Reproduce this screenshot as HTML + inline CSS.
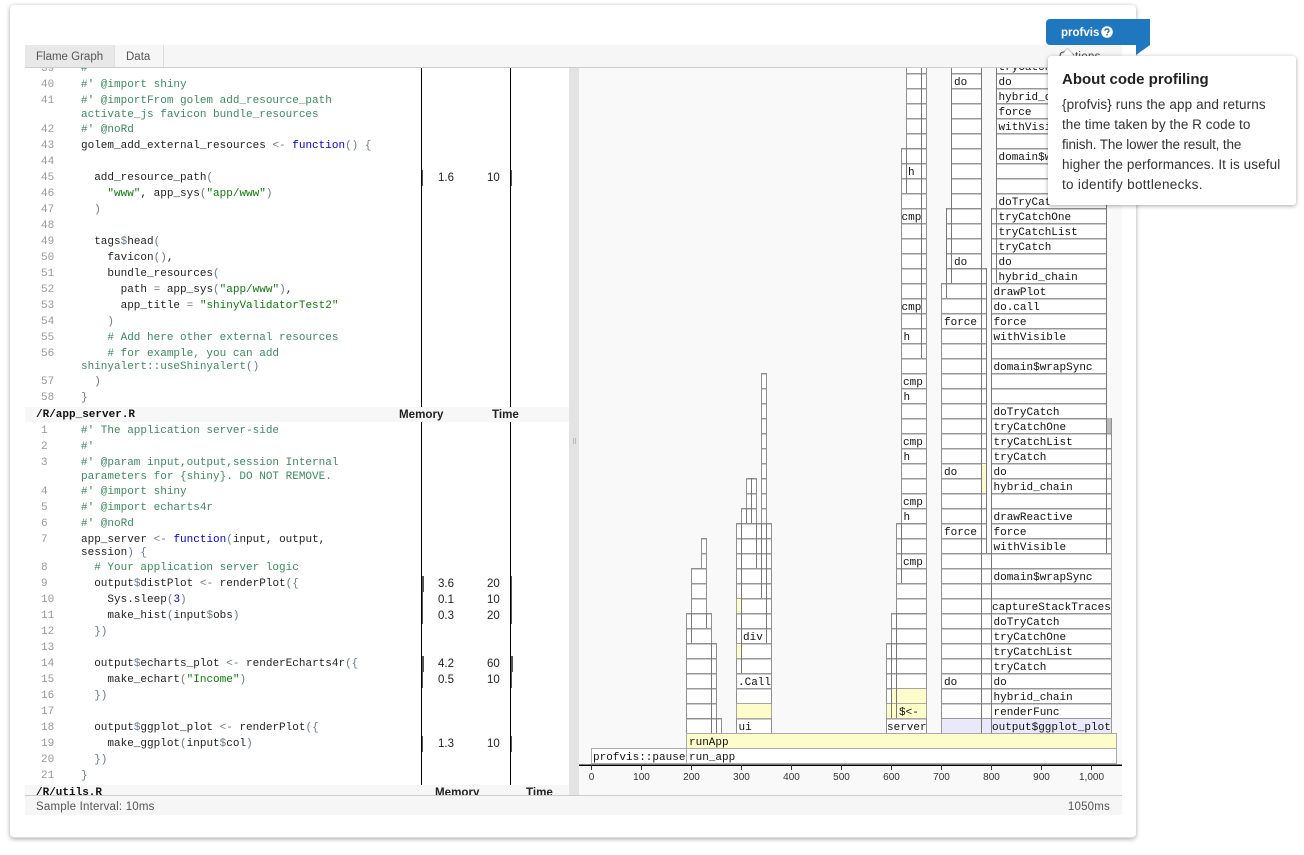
<!DOCTYPE html>
<html><head><meta charset="utf-8"><title>profvis</title>
<style>
html,body{margin:0;padding:0;background:#fff;width:1304px;height:855px;overflow:hidden}
body{position:relative;font-family:"Liberation Sans",sans-serif}
.abs{position:absolute}
#card{left:10px;top:5px;width:1126px;height:832px;background:#fff;border-radius:4px;box-shadow:0 1px 5px rgba(0,0,0,.35);border-bottom:1px solid #ddd}
#left{left:25px;top:68px;width:544px;height:727px;background:#fff;overflow:hidden}
#split{left:569px;top:68px;width:10px;height:727px;background:#e3e3e3}
#right{left:579px;top:68px;width:543px;height:727px;background:#f9f9f9}
#bar{left:25px;top:45px;width:1097px;height:22px;background:#f6f6f6;border-bottom:1px solid #ccc;font-size:11.5px;color:#555}
#t1{left:0;top:0;width:89px;height:22px;background:#e8e8e8;border-right:1px solid #ddd;line-height:24px;text-indent:11px}
#t2{left:90px;top:0;width:48px;height:22px;border-right:1px solid #ddd;line-height:24px;text-indent:11px}
#foot{left:25px;top:795px;width:1097px;height:19px;background:#f6f6f6;border-top:1px solid #ccc;font-size:11.5px;color:#555;line-height:22px;letter-spacing:.2px}
.l{position:absolute;left:56px;margin-top:1px;white-space:pre;font:11px/16px "Liberation Mono",monospace;color:#222}
.l i{position:absolute;left:-40px;font-style:normal;color:#999}
.c{color:#3d8a5f}.s{color:#0b7a0b}.k{color:#0000d0}.p{color:#6a7a8a}
.h{position:absolute;left:0;width:544px;height:15px;background:#f7f7f7;font:bold 11px/16px "Liberation Mono",monospace;color:#111}
.h b{position:absolute;top:0;font:bold 11.6px/16px "Liberation Sans",sans-serif;color:#222}
.v{position:absolute;background:#000}
.m{position:absolute;margin-top:1px;font-size:11.5px;line-height:16px;color:#222;white-space:pre}
.g{position:absolute;margin-top:1px;background:#555;height:16px}
#rib{left:1046px;top:19px;width:104px;height:26px;background:#1f77c0;border-radius:4px 0 0 4px;color:#fff;font-weight:bold;font-size:11.5px;line-height:25px}
#tip{left:1048px;top:56px;width:248px;height:149px;background:#fff;border-radius:3px;box-shadow:0 1px 4px rgba(0,0,0,.35)}
#tip h3{position:absolute;margin:0;left:14px;top:15px;font-size:15px;line-height:18px;color:#222;font-weight:bold;white-space:pre}
#tip div{position:absolute;left:14px;font-size:13.5px;line-height:20px;color:#333;white-space:pre}
svg text.f{font:11px "Liberation Mono",monospace;fill:#111}
svg text.a{font:10px "Liberation Sans",sans-serif;fill:#333;text-anchor:middle}
</style></head><body>
<div class="abs" id="card"></div>
<div class="abs" id="left">
<div class="g" style="left:396.500px;top:101px;width:1.500px"></div><div class="g" style="left:485px;top:101px;width:1.500px"></div>
<div class="m" style="left:413px;top:101px">1.6</div><div class="m" style="left:462px;top:101px">10</div>
<div class="g" style="left:396.500px;top:507px;width:2px"></div><div class="g" style="left:485px;top:507px;width:2px"></div>
<div class="m" style="left:413px;top:507px">3.6</div><div class="m" style="left:462px;top:507px">20</div>
<div class="g" style="left:396.500px;top:523px;width:1.500px"></div><div class="g" style="left:485px;top:523px;width:1.500px"></div>
<div class="m" style="left:413px;top:523px">0.1</div><div class="m" style="left:462px;top:523px">10</div>
<div class="g" style="left:396.500px;top:539px;width:1.500px"></div><div class="g" style="left:485px;top:539px;width:2px"></div>
<div class="m" style="left:413px;top:539px">0.3</div><div class="m" style="left:462px;top:539px">20</div>
<div class="g" style="left:396.500px;top:587px;width:2px"></div><div class="g" style="left:485px;top:587px;width:3px"></div>
<div class="m" style="left:413px;top:587px">4.2</div><div class="m" style="left:462px;top:587px">60</div>
<div class="g" style="left:396.500px;top:603px;width:1.500px"></div><div class="g" style="left:485px;top:603px;width:1.500px"></div>
<div class="m" style="left:413px;top:603px">0.5</div><div class="m" style="left:462px;top:603px">10</div>
<div class="g" style="left:396.500px;top:667px;width:1.500px"></div><div class="g" style="left:485px;top:667px;width:1.500px"></div>
<div class="m" style="left:413px;top:667px">1.3</div><div class="m" style="left:462px;top:667px">10</div>
<div class="v" style="left:395.500px;top:0;width:1.200px;height:339px"></div>
<div class="v" style="left:485px;top:0;width:1px;height:339px"></div>
<div class="v" style="left:395.500px;top:354px;width:1.200px;height:363px"></div>
<div class="v" style="left:485px;top:354px;width:1px;height:363px"></div>
<div class="l" style="top:-8px"><i>39</i><span class="c">#</span></div>
<div class="l" style="top:8px"><i>40</i><span class="c">#' @import shiny</span></div>
<div class="l" style="top:24px"><i>41</i><span class="c">#' @importFrom golem add_resource_path</span></div>
<div class="l" style="top:38px"><span class="c">activate_js favicon bundle_resources</span></div>
<div class="l" style="top:53px"><i>42</i><span class="c">#' @noRd</span></div>
<div class="l" style="top:69px"><i>43</i>golem_add_external_resources <span class="p">&lt;-</span> <span class="k">function</span><span class="p">() {</span></div>
<div class="l" style="top:85px"><i>44</i></div>
<div class="l" style="top:101px"><i>45</i>  add_resource_path<span class="p">(</span></div>
<div class="l" style="top:117px"><i>46</i>    <span class="s">"www"</span>, app_sys<span class="p">(</span><span class="s">"app/www"</span><span class="p">)</span></div>
<div class="l" style="top:133px"><i>47</i>  <span class="p">)</span></div>
<div class="l" style="top:149px"><i>48</i></div>
<div class="l" style="top:165px"><i>49</i>  tags<span class="p">$</span>head<span class="p">(</span></div>
<div class="l" style="top:181px"><i>50</i>    favicon<span class="p">()</span>,</div>
<div class="l" style="top:197px"><i>51</i>    bundle_resources<span class="p">(</span></div>
<div class="l" style="top:213px"><i>52</i>      path <span class="p">=</span> app_sys<span class="p">(</span><span class="s">"app/www"</span><span class="p">)</span>,</div>
<div class="l" style="top:229px"><i>53</i>      app_title <span class="p">=</span> <span class="s">"shinyValidatorTest2"</span></div>
<div class="l" style="top:245px"><i>54</i>    <span class="p">)</span></div>
<div class="l" style="top:261px"><i>55</i>    <span class="c"># Add here other external resources</span></div>
<div class="l" style="top:277px"><i>56</i>    <span class="c"># for example, you can add</span></div>
<div class="l" style="top:290px"><span class="c">shinyalert::useShinyalert</span><span class="p">()</span></div>
<div class="l" style="top:305px"><i>57</i>  <span class="p">)</span></div>
<div class="l" style="top:321px"><i>58</i><span class="p">}</span></div>
<div class="h" style="top:339px;text-indent:11px">/R/app_server.R<b style="left:374px;text-indent:0">Memory</b><b style="left:467px;text-indent:0">Time</b></div>
<div class="l" style="top:354px"><i>1</i><span class="c">#' The application server-side</span></div>
<div class="l" style="top:370px"><i>2</i><span class="c">#'</span></div>
<div class="l" style="top:386px"><i>3</i><span class="c">#' @param input,output,session Internal</span></div>
<div class="l" style="top:400px"><span class="c">parameters for {shiny}. DO NOT REMOVE.</span></div>
<div class="l" style="top:415px"><i>4</i><span class="c">#' @import shiny</span></div>
<div class="l" style="top:431px"><i>5</i><span class="c">#' @import echarts4r</span></div>
<div class="l" style="top:447px"><i>6</i><span class="c">#' @noRd</span></div>
<div class="l" style="top:463px"><i>7</i>app_server <span class="p">&lt;-</span> <span class="k">function</span><span class="p">(</span>input, output,</div>
<div class="l" style="top:476px">session<span class="p">) {</span></div>
<div class="l" style="top:491px"><i>8</i>  <span class="c"># Your application server logic</span></div>
<div class="l" style="top:507px"><i>9</i>  output<span class="p">$</span>distPlot <span class="p">&lt;-</span> renderPlot<span class="p">({</span></div>
<div class="l" style="top:523px"><i>10</i>    Sys.sleep<span class="p">(</span><span class="k">3</span><span class="p">)</span></div>
<div class="l" style="top:539px"><i>11</i>    make_hist<span class="p">(</span>input<span class="p">$</span>obs<span class="p">)</span></div>
<div class="l" style="top:555px"><i>12</i>  <span class="p">})</span></div>
<div class="l" style="top:571px"><i>13</i></div>
<div class="l" style="top:587px"><i>14</i>  output<span class="p">$</span>echarts_plot <span class="p">&lt;-</span> renderEcharts4r<span class="p">({</span></div>
<div class="l" style="top:603px"><i>15</i>    make_echart<span class="p">(</span><span class="s">"Income"</span><span class="p">)</span></div>
<div class="l" style="top:619px"><i>16</i>  <span class="p">})</span></div>
<div class="l" style="top:635px"><i>17</i></div>
<div class="l" style="top:651px"><i>18</i>  output<span class="p">$</span>ggplot_plot <span class="p">&lt;-</span> renderPlot<span class="p">({</span></div>
<div class="l" style="top:667px"><i>19</i>    make_ggplot<span class="p">(</span>input<span class="p">$</span>col<span class="p">)</span></div>
<div class="l" style="top:683px"><i>20</i>  <span class="p">})</span></div>
<div class="l" style="top:699px"><i>21</i><span class="p">}</span></div>
<div class="h" style="top:717px;height:12px;text-indent:11px;line-height:17px">/R/utils.R<b style="left:410px;text-indent:0;top:0">Memory</b><b style="left:501px;text-indent:0;top:0">Time</b></div>
</div>
<div class="abs" id="split">
<div class="abs" style="left:3.500px;top:370px;width:1px;height:6px;background:#bbb"></div>
<div class="abs" style="left:5.500px;top:370px;width:1px;height:6px;background:#bbb"></div>
</div>
<div class="abs" id="right"></div>

<svg class="abs" style="left:0;top:0" width="1304" height="855" viewBox="0 0 1304 855">
<defs>
<pattern id="r" width="20" height="15" patternUnits="userSpaceOnUse"><rect width="20" height="15" fill="#fff"/><rect y="13" width="20" height="1" fill="#999"/><rect y="14" width="20" height="1" fill="#ccc"/></pattern>
<clipPath id="cl"><rect x="579" y="68" width="543" height="727"/></clipPath>
</defs>
<g clip-path="url(#cl)">
<g fill="url(#r)" stroke="#8f8f8f" stroke-width="1">
<rect x="686.5" y="718.5" width="35" height="15"/>
<rect x="686.5" y="643.5" width="30" height="75"/>
<rect x="686.5" y="613.5" width="25" height="30"/>
<rect x="691.5" y="568.5" width="15" height="45"/>
<rect x="701.5" y="538.5" width="5" height="30"/>
<rect x="736.5" y="523.5" width="35" height="210"/>
<rect x="741.5" y="508.5" width="15" height="15"/>
<rect x="746.5" y="478.5" width="10" height="30"/>
<rect x="761.5" y="373.5" width="5" height="150"/>
<rect x="886.5" y="643.5" width="40" height="90"/>
<rect x="891.5" y="613.5" width="35" height="30"/>
<rect x="896.5" y="523.5" width="30" height="90"/>
<rect x="901.5" y="148.5" width="25" height="375"/>
<rect x="906.5" y="40.5" width="20" height="108"/>
<rect x="941.5" y="283.5" width="40" height="450"/>
<rect x="946.5" y="208.5" width="35" height="75"/>
<rect x="951.5" y="40.5" width="30" height="168"/>
<rect x="981.5" y="268.5" width="5" height="285"/>
<rect x="981.5" y="553.5" width="10" height="180"/>
<rect x="991.5" y="208.5" width="115" height="210"/>
<rect x="996.5" y="40.5" width="110" height="168"/>
<rect x="991.5" y="418.5" width="120" height="315"/>
<rect x="946.5" y="268.5" width="40" height="15"/>
</g>
<g fill="#fdfdcc" stroke="#8f8f8f" stroke-width=".6">
<rect x="736.5" y="703.5" width="35" height="15"/>
<rect x="736.5" y="643.5" width="5" height="15"/>
<rect x="736.5" y="598.5" width="5" height="15"/>
<rect x="886.5" y="703.5" width="40" height="15"/>
<rect x="891.5" y="688.5" width="35" height="15"/>
<rect x="981.5" y="463.5" width="5" height="30"/>
</g>
<rect x="941.5" y="718.5" width="170" height="15" fill="#e9e9fb" stroke="#999"/>
<rect x="1106" y="418" width="5" height="15" fill="#bbb"/>
<rect x="686.5" y="733.5" width="430" height="15" fill="#fdfdcc" stroke="#aaa"/>
<rect x="686.5" y="748.5" width="430" height="15" fill="#fff" stroke="#aaa"/>
<rect x="591.5" y="748.5" width="95" height="15" fill="#fff" stroke="#aaa"/>
<path fill="none" stroke="#777" stroke-width="1" d="M711.5 643V733M716.5 718V733M691.5 613V643M706.5 613V628M741.5 523V673M756.5 523V568M761.5 523V598M766.5 523V643M746.5 508V523M751.5 478V523M891.5 643V718M896.5 613V718M901.5 523V583M906.5 148V193M921.5 68V358M946.5 208V298M951.5 68V283M981.5 68V733M986.5 268V553M991.5 208V733M996.5 68V283M1106.5 68V553"/>
<g class="labels">
<text class="f" x="593" y="760">profvis::pause</text>
<text class="f" x="689" y="760">run_app</text>
<text class="f" x="689" y="745">runApp</text>
<text class="f" x="738.5" y="730">ui</text>
<text class="f" x="738" y="685">.Call</text>
<text class="f" x="743" y="640">div</text>
<text class="f" x="887" y="730">server</text>
<text class="f" x="899" y="715">$&lt;-</text>
<text class="f" x="903" y="565">cmp</text>
<text class="f" x="903.5" y="520">h</text>
<text class="f" x="903" y="505">cmp</text>
<text class="f" x="903.5" y="460">h</text>
<text class="f" x="903" y="445">cmp</text>
<text class="f" x="903.5" y="400">h</text>
<text class="f" x="903" y="385">cmp</text>
<text class="f" x="903.5" y="340">h</text>
<text class="f" x="901.5" y="310">cmp</text>
<text class="f" x="901.5" y="220">cmp</text>
<text class="f" x="908" y="175">h</text>
<text class="f" x="944" y="685">do</text>
<text class="f" x="944" y="535">force</text>
<text class="f" x="944" y="475">do</text>
<text class="f" x="944" y="325">force</text>
<text class="f" x="954" y="265">do</text>
<text class="f" x="954" y="85">do</text>
<text class="f" x="992" y="730">output$ggplot_plot</text>
<text class="f" x="993.5" y="715">renderFunc</text>
<text class="f" x="993.5" y="700">hybrid_chain</text>
<text class="f" x="993.5" y="685">do</text>
<text class="f" x="993.5" y="670">tryCatch</text>
<text class="f" x="993.5" y="655">tryCatchList</text>
<text class="f" x="993.5" y="640">tryCatchOne</text>
<text class="f" x="993.5" y="625">doTryCatch</text>
<text class="f" x="992" y="610">captureStackTraces</text>
<text class="f" x="993.5" y="580">domain$wrapSync</text>
<text class="f" x="993.5" y="550">withVisible</text>
<text class="f" x="993.5" y="535">force</text>
<text class="f" x="993.5" y="520">drawReactive</text>
<text class="f" x="993.5" y="490">hybrid_chain</text>
<text class="f" x="993.5" y="475">do</text>
<text class="f" x="993.5" y="460">tryCatch</text>
<text class="f" x="993.5" y="445">tryCatchList</text>
<text class="f" x="993.5" y="430">tryCatchOne</text>
<text class="f" x="993.5" y="415">doTryCatch</text>
<text class="f" x="993.5" y="370">domain$wrapSync</text>
<text class="f" x="993.5" y="340">withVisible</text>
<text class="f" x="993.5" y="325">force</text>
<text class="f" x="993.5" y="310">do.call</text>
<text class="f" x="993.5" y="295">drawPlot</text>
<text class="f" x="998.5" y="280">hybrid_chain</text>
<text class="f" x="998.5" y="265">do</text>
<text class="f" x="998.5" y="250">tryCatch</text>
<text class="f" x="998.5" y="235">tryCatchList</text>
<text class="f" x="998.5" y="220">tryCatchOne</text>
<text class="f" x="998.5" y="205">doTryCatch</text>
<text class="f" x="998.5" y="160">domain$wrapSync</text>
<text class="f" x="998.5" y="130">withVisible</text>
<text class="f" x="998.5" y="115">force</text>
<text class="f" x="998.5" y="100">hybrid_chain</text>
<text class="f" x="998.5" y="85">do</text>
<text class="f" x="998.5" y="70">tryCatch</text>
</g>
<path fill="none" stroke="#000" stroke-width="1.5" d="M579 765.2H1122"/>
<path fill="none" stroke="#333" d="M591.5 765V770M641.5 765V770M691.5 765V770M741.5 765V770M791.5 765V770M841.5 765V770M891.5 765V770M941.5 765V770M991.5 765V770M1041.5 765V770M1091.5 765V770"/>
<text class="a" x="591.5" y="780">0</text>
<text class="a" x="641.5" y="780">100</text>
<text class="a" x="691.5" y="780">200</text>
<text class="a" x="741.5" y="780">300</text>
<text class="a" x="791.5" y="780">400</text>
<text class="a" x="841.5" y="780">500</text>
<text class="a" x="891.5" y="780">600</text>
<text class="a" x="941.5" y="780">700</text>
<text class="a" x="991.5" y="780">800</text>
<text class="a" x="1041.5" y="780">900</text>
<text class="a" x="1091.5" y="780">1,000</text>
</g>
</svg>

<div class="abs" id="bar">
<div class="abs" id="t1">Flame Graph</div>
<div class="abs" id="t2">Data</div>
<div class="abs" style="left:1034px;top:6px;color:#444;letter-spacing:.3px">Options</div>
</div>
<div class="abs" id="foot"><span class="abs" style="left:11px;top:0">Sample Interval: 10ms</span><span class="abs" style="right:12px;top:0">1050ms</span></div>

<svg class="abs" style="left:1130px;top:40px" width="24" height="20"><polygon points="6,5 20,5 6,15" fill="#1f77c0"/></svg>
<div class="abs" id="rib"><span class="abs" style="left:15px;top:1.500px">profvis</span>
<svg class="abs" style="left:55px;top:7px" width="12" height="12" viewBox="0 0 12 12"><circle cx="6" cy="6" r="5.8" fill="#fff"/><path d="M4 4.7C4 3.5 5 3 6 3c1.200 0 2 .7 2 1.700 0 1.400-1.500 1.300-1.500 2.500" fill="none" stroke="#1f77c0" stroke-width="1.400"/><rect x="5.300" y="8" width="1.500" height="1.500" fill="#1f77c0"/></svg></div>
<div class="abs" style="left:1063px;top:51px;width:9px;height:9px;background:#fff;transform:rotate(45deg);box-shadow:-1px -1px 1px rgba(0,0,0,.2)"></div>
<div class="abs" id="tip">
<h3>About code profiling</h3>
<div style="top:39px;letter-spacing:.12px">{profvis} runs the app and returns</div>
<div style="top:59px;letter-spacing:.05px">the time taken by the R code to</div>
<div style="top:79px;letter-spacing:-.13px">finish. The lower the result, the</div>
<div style="top:99px;letter-spacing:.1px">higher the performances. It is useful</div>
<div style="top:119px;letter-spacing:.3px">to identify bottlenecks.</div>
</div>
</body></html>
